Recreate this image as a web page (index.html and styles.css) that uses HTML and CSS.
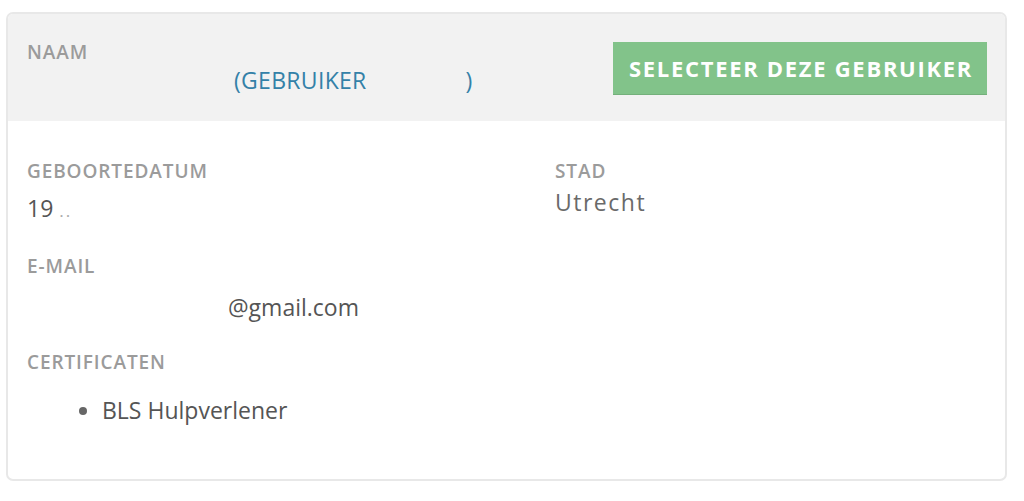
FILE: index.html
```html
<!DOCTYPE html>
<html lang="nl">
<head>
<meta charset="utf-8">
<title>Gebruiker</title>
<link rel="stylesheet" href="styles.css">
</head>
<body>
<div class="card">
  <div class="card-header">
    <div class="name-block">
      <div class="label">NAAM</div>
      <div class="name"><span class="blank-a"></span>(GEBRUIKER<span class="blank-b"></span>)</div>
    </div>
    <button class="select-btn" type="button">SELECTEER DEZE GEBRUIKER</button>
  </div>
  <div class="card-body">
    <div class="col">
      <div class="field">
        <div class="label">GEBOORTEDATUM</div>
        <div class="value birth">19 <span class="dim">..</span></div>
      </div>
      <div class="field">
        <div class="label">E-MAIL</div>
        <div class="value email"><span class="blank-c"></span>@gmail.com</div>
      </div>
      <div class="field">
        <div class="label">CERTIFICATEN</div>
        <ul class="certs">
          <li>BLS Hulpverlener</li>
        </ul>
      </div>
    </div>
    <div class="col">
      <div class="field">
        <div class="label">STAD</div>
        <div class="value city">Utrecht</div>
      </div>
    </div>
  </div>
</div>
</body>
</html>
```
FILE: styles.css
```css
* { box-sizing: border-box; }
html, body { background: #ffffff; }
body {
  margin: 0;
  padding: 12px 17px 0 6px;
  font-family: "Open Sans", "Noto Sans", sans-serif;
  color: #555;
}
.card {
  border: 2px solid #e8e8e8;
  border-radius: 7px;
  height: 469px;
  overflow: hidden;
  background: #fff;
}
.card-header {
  background: #f2f2f2;
  height: 107px;
  display: flex;
  justify-content: space-between;
  align-items: flex-start;
  padding: 26px 18px 0 19px;
}
.label {
  font-size: 19px;
  font-weight: 600;
  letter-spacing: 0.9px;
  color: #9b9b9b;
  line-height: 24px;
}
.name {
  margin-top: 1px;
  font-size: 23px;
  letter-spacing: 0.3px;
  color: #3481a8;
  line-height: 30px;
  display: flex;
}
.blank-a { width: 207px; }
.blank-b { width: 99px; }
.blank-c { width: 201px; }
.select-btn {
  margin-top: 2px;
  width: 374px;
  height: 53px;
  background: #82c38a;
  border: 0;
  border-bottom: 1px solid #74b07b;
  color: #fff;
  font-family: "Open Sans", "Noto Sans", sans-serif;
  font-weight: 700;
  font-size: 22px;
  letter-spacing: 1.7px;
  padding: 0 0 0 2px;
}
.card-body {
  display: grid;
  grid-template-columns: 528px 1fr;
  padding: 38px 19px 0 19px;
}
.field { margin-bottom: 28px; }
.value {
  font-size: 23px;
  line-height: 30px;
  color: #555;
  display: flex;
  align-items: baseline;
}
.birth { margin-top: 10px; }
.email { margin-top: 14px; }
.dim { color: #aaa; font-size: 17px; margin-left: 6px; letter-spacing: 2px; }
.city { color: #6a6a6a; margin-top: 4px; letter-spacing: 1.5px; }
.certs {
  margin: 21px 0 0 0;
  padding: 0 0 0 75px;
  font-size: 23px;
  line-height: 30px;
  color: #555;
}
.certs li::marker { color: #666; }
```
